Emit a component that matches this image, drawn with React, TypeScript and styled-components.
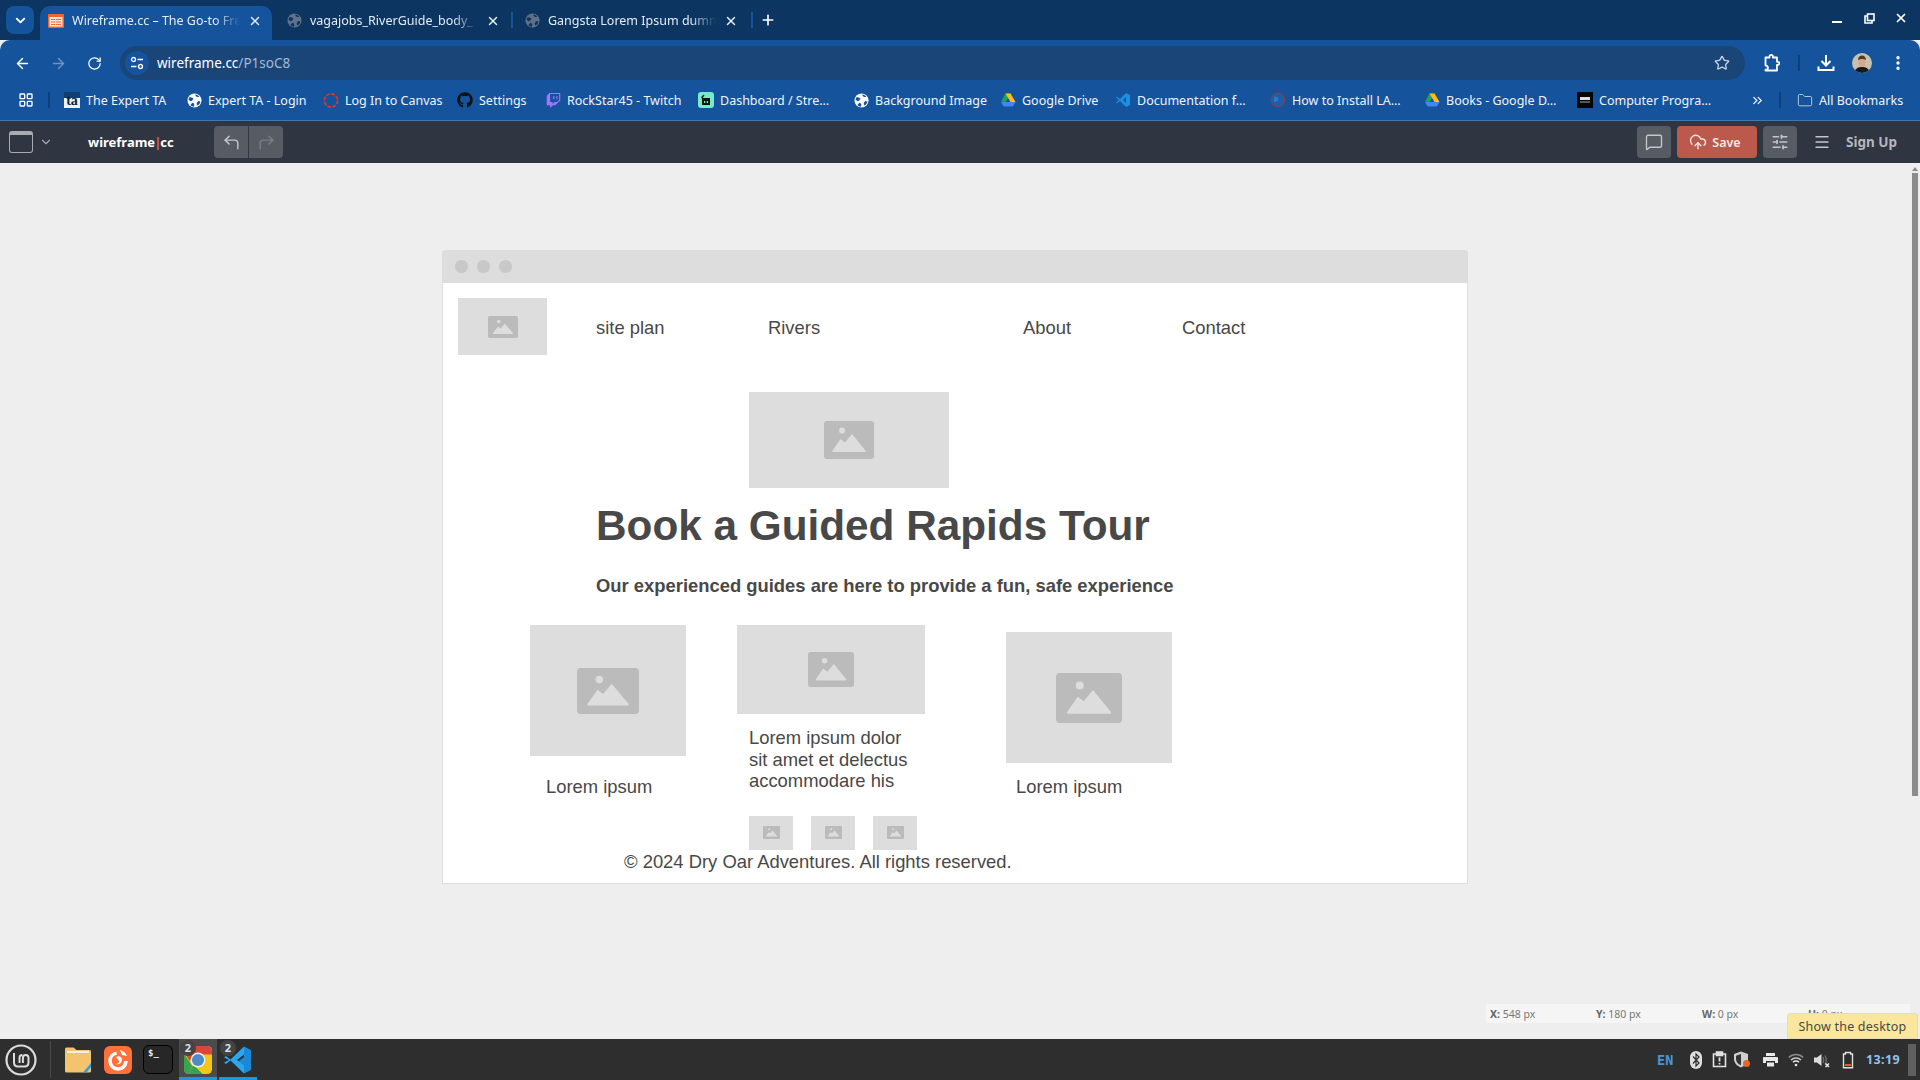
import React from "react";
import styled, { createGlobalStyle } from "styled-components";
import {
  ArrowLeft,
  ArrowRight,
  ChevronDown,
  ChevronsRight,
  CloudUpload,
  CornerUpLeft,
  CornerUpRight,
  EllipsisVertical,
  Folder,
  LayoutGrid,
  Menu,
  MessageSquare,
  Plus,
  RotateCw,
  SlidersHorizontal,
  Star,
  X,
} from "lucide-react";
import { FaGithub, FaTwitch } from "react-icons/fa";

const GlobalStyle = createGlobalStyle`
  html, body {
    margin: 0;
    padding: 0;
    background: #eeeeee;
  }
  * {
    box-sizing: border-box;
  }
`;

const Page = styled.div`
  width: 1920px;
  height: 1080px;
  display: flex;
  flex-direction: column;
  overflow: hidden;
  font-family: "Noto Sans", "Open Sans", sans-serif;
`;

const TabStrip = styled.div`
  height: 40px;
  display: flex;
  padding-left: 6px;
  background: #0c3562;
  color: #e4ecf6;
`;

const TabListButton = styled.div`
  width: 28px;
  height: 28px;
  margin: 6px 6px 0 0;
  border-radius: 8px;
  background: #15539c;
  display: flex;
  align-items: center;
  justify-content: center;
  color: #fff;
`;

const Tab = styled.div<{ $active?: boolean }>`
  width: 232px;
  height: 34px;
  margin-top: 6px;
  padding: 0 8px 5px;
  display: flex;
  align-items: center;
  gap: 8px;
  border-radius: 10px 10px 0 0;
  background: ${({ $active }) => ($active ? "#15539c" : "transparent")};
  font-size: 12.5px;
  flex-shrink: 0;
`;

const TabTitle = styled.span`
  width: 168px;
  white-space: nowrap;
  -webkit-mask-image: linear-gradient(to right, #000 85%, transparent);
  mask-image: linear-gradient(to right, #000 85%, transparent);
`;

const TabGap = styled.div<{ $width: number }>`
  width: ${({ $width }) => $width}px;
  flex-shrink: 0;
`;

const TabDivider = styled.div<{ $left: number; $right: number }>`
  width: 2px;
  height: 16px;
  margin: 12px ${({ $right }) => $right}px 0 ${({ $left }) => $left}px;
  background: #15539c;
  flex-shrink: 0;
`;

const NewTab = styled.div`
  margin: 12px 0 0 7px;
  color: #fff;
  display: flex;
`;

const WindowButtons = styled.div`
  margin-left: auto;
  display: flex;
  padding: 0 3px 4px 0;
  align-items: center;
  color: #fff;
`;

const WindowButton = styled.div`
  width: 32px;
  display: flex;
  justify-content: center;
`;

const MinimizeGlyph = styled.div`
  width: 10px;
  height: 2px;
  margin-top: 8px;
  background: #fff;
`;

const Toolbar = styled.div`
  height: 40px;
  padding-top: 6px;
  display: flex;
  background: #15539c;
  border-radius: 10px 10px 0 0;
  color: #fff;
`;

const ToolSlot = styled.div<{ $muted?: boolean }>`
  width: 36px;
  height: 34px;
  display: flex;
  align-items: center;
  justify-content: center;
  color: ${({ $muted }) => ($muted ? "#6f93c0" : "#fff")};
`;

const NavGroup = styled.div`
  display: flex;
  padding-left: 4px;
  margin-right: 8px;
`;

const AddressBar = styled.div`
  width: 1625px;
  height: 34px;
  border-radius: 17px;
  background: #1a4579;
  display: flex;
  align-items: center;
  padding: 0 15px 0 5px;
  font-size: 13.5px;
  color: #fff;
`;

const SiteChip = styled.div`
  width: 24px;
  height: 24px;
  border-radius: 50%;
  background: #15539c;
  margin-right: 8px;
  display: flex;
  align-items: center;
  justify-content: center;
`;

const UrlPath = styled.span`
  color: #a5bad4;
`;

const BookmarkStar = styled.div`
  margin-left: auto;
  display: flex;
  color: #c5d2e2;
`;

const ToolCluster = styled.div`
  display: flex;
  align-items: flex-start;
  padding-left: 9px;
`;

const ToolDivider = styled.div`
  width: 2px;
  height: 16px;
  margin: 9px 8px 0;
  background: #0f3f78;
`;

const Avatar = styled.div`
  width: 20px;
  height: 20px;
  border-radius: 50%;
  overflow: hidden;
  display: flex;
`;

const BookmarkBar = styled.div`
  height: 40px;
  display: flex;
  align-items: center;
  background: #15539c;
  color: #f0f4fa;
  font-size: 12.5px;
`;

const AppsSlot = styled.div`
  width: 28px;
  margin-left: 12px;
  display: flex;
  justify-content: center;
  color: #fff;
`;

const BarDivider = styled.div<{ $left: number; $right: number }>`
  width: 2px;
  height: 16px;
  margin: 0 ${({ $right }) => $right}px 0 ${({ $left }) => $left}px;
  background: #0f3f78;
`;

const Bookmark = styled.div<{ $width: number }>`
  width: ${({ $width }) => $width}px;
  display: flex;
  align-items: center;
  gap: 6px;
  white-space: nowrap;
  flex-shrink: 0;
`;

const Favicon = styled.span`
  width: 16px;
  height: 16px;
  display: flex;
  align-items: center;
  justify-content: center;
  flex-shrink: 0;
`;

const TaFavicon = styled.span`
  width: 16px;
  height: 16px;
  flex-shrink: 0;
  text-align: center;
  background: linear-gradient(to bottom, #123d70 35%, #eef2f6 35%);
  color: #0b2440;
  font-family: "Liberation Serif", serif;
  font-size: 14px;
  font-weight: 700;
  line-height: 17px;
`;

const MintFavicon = styled(Favicon)`
  border-radius: 3px;
  background: #74ebc9;
`;

const MoreSlot = styled.div`
  width: 24px;
  margin-left: 4px;
  display: flex;
  justify-content: center;
`;

const AppBar = styled.div`
  height: 43px;
  border-top: 1px solid #4577ae;
  background: #2f3541;
  display: flex;
  align-items: center;
  color: #c4c6ca;
`;

const CanvasIcon = styled.div`
  width: 24px;
  height: 22px;
  margin-left: 9px;
  border: 1.5px solid #a9abaf;
  border-top-width: 4px;
  border-radius: 3px;
`;

const CanvasCaret = styled.div`
  width: 14px;
  margin-left: 6px;
  display: flex;
  color: #a5a8ae;
`;

const Logo = styled.div`
  width: 100px;
  margin-left: 35px;
  font-size: 13px;
  font-weight: 700;
  color: #fff;
`;

const LogoBar = styled.span`
  margin: 0 -1px;
  color: #e2634d;
`;

const HistoryGroup = styled.div`
  margin-left: 26px;
  display: flex;
  gap: 1px;
  border-radius: 4px;
  overflow: hidden;
`;

const HistoryButton = styled.div<{ $muted?: boolean }>`
  width: 34px;
  height: 32px;
  display: flex;
  align-items: center;
  justify-content: center;
  background: #575b64;
  color: ${({ $muted }) => ($muted ? "#7b7f86" : "#c4c6ca")};
`;

const AppActions = styled.div`
  margin-left: auto;
  display: flex;
  align-items: center;
  gap: 6px;
`;

const SquareButton = styled.div`
  width: 34px;
  height: 32px;
  border-radius: 4px;
  background: #575b64;
  display: flex;
  align-items: center;
  justify-content: center;
`;

const SaveButton = styled.div`
  width: 80px;
  height: 32px;
  border-radius: 4px;
  background: #bb5a4c;
  color: #f3e7e4;
  font-size: 12.5px;
  font-weight: 600;
  display: flex;
  align-items: center;
  justify-content: center;
  gap: 5px;
  padding-right: 4px;
`;

const MenuSlot = styled.div`
  margin-left: 10px;
  display: flex;
`;

const SignUp = styled.div`
  width: 50px;
  margin: 0 24px 0 9px;
  font-size: 13.5px;
  font-weight: 700;
  white-space: nowrap;
  color: #b5b7bb;
`;

const Canvas = styled.div`
  flex: 1;
  position: relative;
  padding: 87px 0 0 442px;
  background: #eeeeee;
`;

const MockWindow = styled.div`
  width: 1026px;
  height: 634px;
  background: #fff;
  border: 1px solid #dddddd;
  border-top: none;
  border-radius: 4px 4px 0 0;
  font-family: "Liberation Sans", Arial, sans-serif;
  color: #484848;
  font-size: 18.4px;
  line-height: 21.6px;
`;

const MockTitleBar = styled.div`
  height: 33px;
  margin: 0 -1px;
  padding-left: 13px;
  display: flex;
  align-items: center;
  gap: 9.5px;
  background: #dddddd;
  border-radius: 4px 4px 0 0;
`;

const MockDot = styled.div`
  width: 12.5px;
  height: 12.5px;
  border-radius: 50%;
  background: #c8c8c8;
`;

const MockNav = styled.div`
  display: grid;
  grid-template-columns: 138px 172px 255px 159px auto;
  align-items: center;
  padding: 15px 0 0 15px;
`;

const NavLabel = styled.span`
  padding-top: 3px;
`;

const Placeholder = styled.div<{ $w: number; $h: number }>`
  width: ${({ $w }) => $w}px;
  height: ${({ $h }) => $h}px;
  background: #dddddd;
  display: flex;
  align-items: center;
  justify-content: center;
`;

const Hero = styled(Placeholder)`
  margin: 37px 0 0 306px;
`;

const Heading = styled.h1`
  margin: 12px 0 0 153px;
  font-size: 42.3px;
  line-height: 52px;
  font-weight: 700;
`;

const Subheading = styled.h2`
  margin: 23px 0 0 153px;
  font-size: 18.4px;
  line-height: 22px;
  font-weight: 700;
`;

const CardRow = styled.div`
  display: grid;
  grid-template-columns: 207px 269px auto;
  margin-top: 28px;
  padding-left: 87px;
`;

const Card = styled.div<{ $top?: number }>`
  margin-top: ${({ $top }) => $top ?? 0}px;
`;

const Caption = styled.p<{ $top: number; $left: number }>`
  margin: ${({ $top }) => $top}px 0 0 ${({ $left }) => $left}px;
`;

const CardText = styled.p`
  margin: 13px 0 0 12px;
  width: 170px;
`;

const ThumbRow = styled.div`
  display: flex;
  gap: 18px;
  margin: 24px 0 0 12px;
`;

const Footer = styled.p`
  margin: 1px 0 0 181px;
`;

const StatusBar = styled.div`
  position: absolute;
  left: 1486px;
  top: 841px;
  width: 424px;
  height: 19px;
  display: grid;
  grid-template-columns: repeat(4, 106px);
  align-items: center;
  padding-left: 4px;
  background: #f5f5f5;
  color: #777;
  font-size: 10.5px;
`;

const StatusKey = styled.b`
  color: #666;
`;

const ScrollTrack = styled.div`
  position: absolute;
  top: 10px;
  right: 2px;
  width: 6px;
  height: 623px;
  background: #8c8c8c;
`;

const ScrollArrow = styled.div`
  position: absolute;
  top: 4px;
  right: 2px;
  border: 3px solid transparent;
  border-top: none;
  border-bottom: 4px solid #8c8c8c;
`;

const Tooltip = styled.div`
  position: absolute;
  right: 2px;
  bottom: 0;
  width: 131px;
  height: 26px;
  display: flex;
  align-items: center;
  justify-content: center;
  background: #fbe69e;
  border: 1px solid #e4dcc0;
  border-radius: 3px 3px 0 0;
  color: #4a4a40;
  font-size: 12.5px;
  letter-spacing: 0.2px;
`;

const Taskbar = styled.div`
  height: 41px;
  background: #2e2e2e;
  display: flex;
  align-items: stretch;
`;

const MintSlot = styled.div`
  width: 50px;
  display: flex;
  align-items: center;
  padding-left: 5px;
`;

const TaskDivider = styled.div`
  width: 1px;
  margin: 2px 8px 2px 0;
  background: #4a4a4a;
`;

const Launchers = styled.div`
  display: flex;
  gap: 2px;
`;

const Launcher = styled.div<{ $state?: "open" | "focused" }>`
  position: relative;
  width: 38px;
  padding-top: 3px;
  display: flex;
  align-items: center;
  justify-content: center;
  background: ${({ $state }) => ($state === "focused" ? "#4b4b4b" : "transparent")};
  border-bottom: 3px solid ${({ $state }) => ($state ? "#1c97dd" : "transparent")};
`;

const CountBadge = styled.span`
  position: absolute;
  top: 1px;
  left: 1px;
  width: 16px;
  height: 16px;
  border-radius: 50%;
  background: #444444;
  color: #d5dfe8;
  font-size: 11px;
  font-weight: 700;
  line-height: 16px;
  text-align: center;
`;

const TerminalIcon = styled.div`
  width: 30px;
  height: 29px;
  padding: 1px 0 0 4px;
  border-radius: 6px;
  border: 1px solid #000;
  background: #272727;
  color: #eee;
  font-family: "DejaVu Sans Mono", monospace;
  font-size: 9px;
  font-weight: 700;
  line-height: 12px;
`;

const Tray = styled.div`
  margin-left: auto;
  padding-right: 4px;
  display: flex;
  align-items: center;
  color: #e2e2e2;
`;

const TrayLang = styled.div`
  width: 27px;
  color: #4a97d3;
  font-family: "DejaVu Sans Mono", monospace;
  font-size: 13.5px;
  font-weight: 700;
`;

const TraySlot = styled.div<{ $w: number }>`
  width: ${({ $w }) => $w}px;
  display: flex;
  justify-content: center;
`;

const TrayClock = styled.div`
  width: 42px;
  margin-left: 8px;
  color: #8fc2ee;
  font-size: 12.5px;
  font-weight: 700;
  letter-spacing: 0.4px;
`;

const ShowDesktop = styled.div`
  width: 8px;
  height: 32px;
  background: #5e5e5e;
`;

// grey placeholder picture used all over the mock
const ImageGlyph = ({ w, h }: { w: number; h: number }) => (
  <svg width={w} height={h} viewBox="0 0 50 38" preserveAspectRatio="none">
    <rect width="50" height="38" rx="3" fill="#bbbbbb" />
    <ellipse cx="18" cy="9.5" rx="3" ry="3" fill="#dddddd" />
    <path
      d="M8.5 29.5 16.5 18l4.5 3.5L28 13l13.5 16.5q.8 1.5-.8 1.5H9.3q-1.6 0-.8-1.5Z"
      fill="#dddddd"
    />
  </svg>
);

const Globe = ({ back = "#fff", land = "#15539c", size = 15 }) => (
  <svg width={size} height={size} viewBox="0 0 16 16">
    <circle cx="8" cy="8" r="7.5" fill={back} />
    <path
      d="M3 4.2c1.3.4 2.2 1 3.4 1 .8.9.2 1.7-.6 2.1-.2 1.2-.9 1.6-2 1.5L1.6 7C1.7 6 2.2 5 3 4.2ZM9 1.6c1.6.2 3 1 4 2.2-.6.6-1.3.6-2 .4-1-.2-1.3-.8-2-1.4Zm3 6.9c1 .2 1.8.4 2.3.8-.4 1.7-1.6 3.2-3.1 4.1-.8-.7-1-1.7-.7-2.7.4-.8.8-1.4 1.5-2.2ZM6 10.5c1 .3 1.6 1 1.8 2l-.6 2.2C5.8 14.5 4.6 13.8 3.700 12.800 4.400 11.800 5 11 6 10.500Z"
      fill={land}
    />
  </svg>
);

const WireframeFavicon = () => (
  <svg width="16" height="14" viewBox="0 0 16 14">
    <rect width="16" height="14" rx="1" fill="#f2662d" />
    <rect x="1.5" y="3" width="13" height="9.5" fill="#fde4d5" />
    <path d="M3 5h4v1H3Zm5 0h5v1H8ZM3 7.500h4v1H3Zm5 0h5v1H8ZM3 10h4v1H3Zm5 0h5v1H8Z" fill="#f2662d" />
  </svg>
);

const SiteInfoGlyph = () => (
  <svg width="14" height="14" viewBox="0 0 14 14" fill="none" stroke="#fff" strokeWidth="1.3">
    <circle cx="3.5" cy="3.5" r="2" />
    <path d="M7.5 3.5H13M1 10.500h5.500" />
    <circle cx="10.5" cy="10.5" r="2" />
  </svg>
);

const CanvasRing = () => (
  <svg width="17" height="17" viewBox="0 0 17 17">
    <circle cx="8.5" cy="8.5" r="7" fill="none" stroke="#e5322d" strokeWidth="1.8" strokeDasharray="4 1.5" />
  </svg>
);

const DriveGlyph = ({ size = 16 }) => (
  <svg width={size} height={size} viewBox="0 0 16 16">
    <path d="M5.500 1.500h5L6 9.800H1Z" fill="#1fa463" />
    <path d="M10.500 1.500 15.500 10h-5L5.500 1.500Z" fill="#ffc107" />
    <path d="M3.500 14.500 1 10h14.500L13 14.500Z" fill="#4285f4" />
  </svg>
);

const DocsFavicon = () => (
  <svg width="16" height="16" viewBox="0 0 16 16">
    <path d="M11 1 15 3v10l-4 2-6-6-3 2.300L1 10.500 4 8 1 5.500l1-.8L5 7Zm0 4L8 8l3 3Z" fill="#1c8fe0" />
  </svg>
);

const LaravelFavicon = () => (
  <svg width="16" height="16" viewBox="0 0 16 16">
    <circle cx="8" cy="8" r="7" fill="#1a5fa8" stroke="#a8323a" strokeWidth="1" />
    <path d="M4 5c2-1 3 0 4 1s0 3-1 3-2 2-3 1Z" fill="#2c7cc4" />
  </svg>
);

const ByuFavicon = () => (
  <svg width="16" height="16" viewBox="0 0 16 16">
    <rect width="16" height="16" fill="#050505" />
    <rect x="3" y="5" width="10" height="3" fill="#ddd" />
    <rect x="3" y="9" width="10" height="2" fill="#555" />
  </svg>
);

const DashboardFavicon = () => (
  <svg width="12" height="12" viewBox="0 0 12 12">
    <path d="M2 4h8v7H2Z" fill="#111" />
    <path d="M1.500 4 4 1" stroke="#111" strokeWidth="1.3" />
    <rect x="4" y="7" width="1.3" height="2" fill="#74ebc9" />
    <rect x="6.7" y="7" width="1.3" height="2" fill="#74ebc9" />
  </svg>
);

const PuzzleGlyph = () => (
  <svg width="16" height="18" viewBox="0 0 16 18" fill="none" stroke="#fff" strokeWidth="1.8" strokeLinejoin="round">
    <path d="M1.500 3.500h4V2.600a1.700 1.700 0 0 1 3.400 0v.9h4.100v4.300h.8a1.500 1.500 0 0 1 0 3h-.8v5.700H1.500v-.8a2 2 0 0 0 1.700-3.500 2 2 0 0 0-1.700-.7Z" />
  </svg>
);

const DownloadGlyph = () => (
  <svg width="18" height="18" viewBox="0 0 18 18" fill="none" stroke="#fff" strokeWidth="2">
    <path d="M9 1v10M4.500 7 9 11.500 13.500 7M1.500 12.500v3.500h15v-3.500" />
  </svg>
);

const AvatarPhoto = () => (
  <svg width="20" height="20" viewBox="0 0 20 20">
    <rect width="20" height="20" fill="#c9c0b0" />
    <ellipse cx="10" cy="9" rx="4" ry="5.5" fill="#d4ab90" />
    <path d="M6 7c0-3 1.800-4.500 4-4.500S14 4 14 7c-2-1.200-5.500-1.200-8 0Z" fill="#4c3a2b" />
    <path d="M2 20c1-5 4.500-6 8-6s7 1 8 6Z" fill="#1a1a1c" />
  </svg>
);

const MintLogo = () => (
  <svg width="32" height="32" viewBox="0 0 32 32" fill="none" stroke="#dcdcdc">
    <circle cx="16" cy="16" r="14.5" strokeWidth="2.2" />
    <path d="M9 9v9.500q0 4 4 4h6.500q4 0 4-4V14q0-3-2.800-3t-2.800 3v5M14.500 19v-5q0-3 2.800-3" strokeWidth="2" />
  </svg>
);

const FilesIcon = () => (
  <svg width="28" height="28" viewBox="0 0 28 28">
    <path d="M1 3q0-1.500 1.500-1.500h7l3 2.500h13q1.500 0 1.500 1.500V25q0 1.500-1.500 1.500h-23Q1 26.500 1 25Z" fill="#f5c36d" />
    <rect x="3" y="5" width="22" height="2" fill="#f4f0e6" />
    <path d="M19 26.500 27 17v4l-4.500 5.500Z" fill="#2f9fe0" />
  </svg>
);

const FirefoxIcon = () => (
  <svg width="28" height="28" viewBox="0 0 28 28">
    <rect width="28" height="28" rx="6" fill="#ff7139" />
    <circle cx="14" cy="15" r="8" fill="none" stroke="#fff" strokeWidth="3.5" strokeDasharray="36 14" />
    <path d="M12 11c3-2 6 0 6 3s-3 5-6 4c2 0 3-1 3-2.500S13 13 12 11Z" fill="#fff" />
    <path d="M16 4c3 1 6 3 7 6l-5-1Z" fill="#fff" />
  </svg>
);

const ChromeIcon = () => (
  <svg width="28" height="28" viewBox="0 0 30 30">
    <rect width="30" height="30" rx="5" fill="#f5c518" />
    <path d="M0 6q0-6 5-6h20q5 0 5 6v3H15L6 16Z" fill="#d8463c" />
    <path d="M0 8l9 14-4 8q-5 0-5-5Z" fill="#36a453" />
    <path d="M10 20 20 30H5Z" fill="#36a453" />
    <circle cx="15" cy="15" r="8" fill="#f2f2f2" />
    <circle cx="15" cy="15" r="6.5" fill="#4a8bc9" />
  </svg>
);

const VsCodeIcon = () => (
  <svg width="30" height="30" viewBox="0 0 30 30">
    <path d="M21 1.500 28 5v20l-7 3.500-9-9.500 9-7Z" fill="#1a8ad8" />
    <path d="M21 1.500 7.500 14.500l-4.500-3.500-2 1.500 5 2.500-5 2.500 2 1.500 4.500-3.500L21 28.500v-8l-7-5.500 7-5.500Z" fill="#2aa7ef" />
  </svg>
);

const BluetoothPill = () => (
  <svg width="12" height="18" viewBox="0 0 12 18">
    <rect width="12" height="18" rx="6" fill="#dedede" />
    <path d="M3 5.500 9 12 6 15V3l3 3-6 6.500" fill="none" stroke="#2e2e2e" strokeWidth="1.2" />
  </svg>
);

const ClipboardAlert = () => (
  <svg width="15" height="17" viewBox="0 0 15 17" fill="none" stroke="#e2e2e2" strokeWidth="1.6">
    <path d="M4.500 3H1.500v12.500h12V3h-3" />
    <rect x="4.5" y="1" width="6" height="3.5" fill="#e2e2e2" />
    <path d="M7.500 6.500v4M7.500 12v1.500" strokeWidth="1.8" />
  </svg>
);

const ShieldAlert = () => (
  <svg width="18" height="17" viewBox="0 0 18 17">
    <path d="M8 .5 15 3v5c0 4-3 7-7 8.500C4 15 1 12 1 8V3Z" fill="#cfcfcf" />
    <path d="M8 3 3 4.700V8c0 3 2 5 5 6.300Z" fill="#333" />
    <circle cx="13.5" cy="12.5" r="3.5" fill="#e0662c" />
  </svg>
);

const PrinterGlyph = () => (
  <svg width="15" height="14" viewBox="0 0 15 14" fill="#e8e8e8">
    <rect x="3" width="9" height="3" />
    <path d="M1 4h13q1 0 1 1v5h-3V8H3v2H0V5q0-1 1-1Z" />
    <rect x="4" y="9.5" width="7" height="4" />
  </svg>
);

const WifiGlyph = () => (
  <svg width="16" height="14" viewBox="0 0 16 14" fill="none" strokeWidth="1.5">
    <path d="M.8 4.500a10 10 0 0 1 14.400 0" stroke="#8a8a8a" />
    <path d="M3 7a7 7 0 0 1 10 0" stroke="#c8c8c8" />
    <path d="M5 9.300a4.200 4.200 0 0 1 6 0" stroke="#e8e8e8" />
    <circle cx="8" cy="12" r="1.3" fill="#e8e8e8" />
  </svg>
);

const VolumeMuted = () => (
  <svg width="16" height="16" viewBox="0 0 16 16">
    <path d="M0 5.500h3L7.500 2v12L3 10.500H0Z" fill="#dcdcdc" />
    <path d="M9 5q1.500 3 0 6M11 3.500q2.500 4.500 0 9" fill="none" stroke="#6f6f6f" strokeWidth="1.3" />
    <path d="M11.500 11.500l3.500 3.500m0-3.500L11.500 15" stroke="#e8e8e8" strokeWidth="1.6" />
  </svg>
);

const BatteryLow = () => (
  <svg width="12" height="18" viewBox="0 0 12 18">
    <path d="M3.500 1.500h5V3h2v13.800h-9V3h2Z" fill="none" stroke="#e2e2e2" strokeWidth="1.4" />
    <rect x="3" y="13" width="6" height="2" fill="#d9622b" />
  </svg>
);

const bookmarks = [
  { title: "The Expert TA", width: 122, icon: <TaFavicon>ta</TaFavicon> },
  { title: "Expert TA - Login", width: 137, icon: <Favicon><Globe /></Favicon> },
  { title: "Log In to Canvas", width: 134, icon: <Favicon><CanvasRing /></Favicon> },
  { title: "Settings", width: 88, icon: <Favicon><FaGithub size={16} color="#111" /></Favicon> },
  { title: "RockStar45 - Twitch", width: 153, icon: <Favicon><FaTwitch size={15} color="#a970ff" /></Favicon> },
  { title: "Dashboard / Stre…", width: 155, icon: <MintFavicon><DashboardFavicon /></MintFavicon> },
  { title: "Background Image", width: 147, icon: <Favicon><Globe /></Favicon> },
  { title: "Google Drive", width: 115, icon: <Favicon><DriveGlyph /></Favicon> },
  { title: "Documentation f…", width: 155, icon: <Favicon><DocsFavicon /></Favicon> },
  { title: "How to Install LA…", width: 154, icon: <Favicon><LaravelFavicon /></Favicon> },
  { title: "Books - Google D…", width: 153, icon: <Favicon><DriveGlyph /></Favicon> },
  { title: "Computer Progra…", width: 164, icon: <Favicon><ByuFavicon /></Favicon> },
];

const App: React.FC = () => {
  return (
    <Page>
      <GlobalStyle />
      <TabStrip>
        <TabListButton>
          <ChevronDown size={15} strokeWidth={3} />
        </TabListButton>
        <Tab $active>
          <Favicon><WireframeFavicon /></Favicon>
          <TabTitle>Wireframe.cc – The Go-to Fre</TabTitle>
          <X size={14} strokeWidth={2.5} />
        </Tab>
        <TabGap $width={6} />
        <Tab>
          <Favicon><Globe back="#5f7287" land="#0c3562" /></Favicon>
          <TabTitle>vagajobs_RiverGuide_body_</TabTitle>
          <X size={14} strokeWidth={2.5} />
        </Tab>
        <TabDivider $left={1} $right={3} />
        <Tab>
          <Favicon><Globe back="#5f7287" land="#0c3562" /></Favicon>
          <TabTitle>Gangsta Lorem Ipsum dumm</TabTitle>
          <X size={14} strokeWidth={2.5} />
        </Tab>
        <TabDivider $left={3} $right={0} />
        <NewTab>
          <Plus size={16} strokeWidth={2.5} />
        </NewTab>
        <WindowButtons>
          <WindowButton><MinimizeGlyph /></WindowButton>
          <WindowButton>
            <svg width="11" height="11" viewBox="0 0 11 11" fill="none" stroke="#fff" strokeWidth="1.6">
              <rect x="3.5" y="1" width="6.5" height="6.5" />
              <path d="M3 3H1v7h7V8" />
            </svg>
          </WindowButton>
          <WindowButton><X size={14} strokeWidth={3} /></WindowButton>
        </WindowButtons>
      </TabStrip>

      <Toolbar>
        <NavGroup>
          <ToolSlot><ArrowLeft size={17} strokeWidth={2} /></ToolSlot>
          <ToolSlot $muted><ArrowRight size={17} strokeWidth={2} /></ToolSlot>
          <ToolSlot><RotateCw size={15} strokeWidth={2} /></ToolSlot>
        </NavGroup>
        <AddressBar>
          <SiteChip><SiteInfoGlyph /></SiteChip>
          <span>
            wireframe.cc<UrlPath>/P1soC8</UrlPath>
          </span>
          <BookmarkStar><Star size={16} strokeWidth={2} /></BookmarkStar>
        </AddressBar>
        <ToolCluster>
          <ToolSlot><PuzzleGlyph /></ToolSlot>
          <ToolDivider />
          <ToolSlot><DownloadGlyph /></ToolSlot>
          <ToolSlot><Avatar><AvatarPhoto /></Avatar></ToolSlot>
          <ToolSlot><EllipsisVertical size={18} strokeWidth={2.5} /></ToolSlot>
        </ToolCluster>
      </Toolbar>

      <BookmarkBar>
        <AppsSlot><LayoutGrid size={16} strokeWidth={2} /></AppsSlot>
        <BarDivider $left={8} $right={14} />
        {bookmarks.map((b) => (
          <Bookmark key={b.title} $width={b.width}>
            {b.icon}
            <span>{b.title}</span>
          </Bookmark>
        ))}
        <MoreSlot><ChevronsRight size={15} strokeWidth={2} /></MoreSlot>
        <BarDivider $left={10} $right={16} />
        <Bookmark $width={120}>
          <Favicon><Folder size={17} strokeWidth={1.5} color="#b5c4d8" /></Favicon>
          <span>All Bookmarks</span>
        </Bookmark>
      </BookmarkBar>

      <AppBar>
        <CanvasIcon />
        <CanvasCaret><ChevronDown size={14} /></CanvasCaret>
        <Logo>
          wireframe<LogoBar>|</LogoBar>cc
        </Logo>
        <HistoryGroup>
          <HistoryButton><CornerUpLeft size={19} strokeWidth={1.8} /></HistoryButton>
          <HistoryButton $muted><CornerUpRight size={19} strokeWidth={1.8} /></HistoryButton>
        </HistoryGroup>
        <AppActions>
          <SquareButton><MessageSquare size={18} strokeWidth={1.8} /></SquareButton>
          <SaveButton>
            <CloudUpload size={18} strokeWidth={1.8} />
            Save
          </SaveButton>
          <SquareButton><SlidersHorizontal size={18} strokeWidth={2.2} /></SquareButton>
          <MenuSlot><Menu size={18} strokeWidth={1.8} /></MenuSlot>
          <SignUp>Sign Up</SignUp>
        </AppActions>
      </AppBar>

      <Canvas>
        <MockWindow>
          <MockTitleBar>
            <MockDot />
            <MockDot />
            <MockDot />
          </MockTitleBar>
          <MockNav>
            <Placeholder $w={89} $h={57}><ImageGlyph w={30} h={22} /></Placeholder>
            <NavLabel>site plan</NavLabel>
            <NavLabel>Rivers</NavLabel>
            <NavLabel>About</NavLabel>
            <NavLabel>Contact</NavLabel>
          </MockNav>
          <Hero $w={200} $h={96}><ImageGlyph w={50} h={38} /></Hero>
          <Heading>Book a Guided Rapids Tour</Heading>
          <Subheading>Our experienced guides are here to provide a fun, safe experience</Subheading>
          <CardRow>
            <Card>
              <Placeholder $w={156} $h={131}><ImageGlyph w={62} h={46} /></Placeholder>
              <Caption $top={20} $left={16}>Lorem ipsum</Caption>
            </Card>
            <Card>
              <Placeholder $w={188} $h={89}><ImageGlyph w={46} h={35} /></Placeholder>
              <CardText>Lorem ipsum dolor sit amet et delectus accommodare his</CardText>
              <ThumbRow>
                <Placeholder $w={44} $h={34}><ImageGlyph w={17} h={13} /></Placeholder>
                <Placeholder $w={44} $h={34}><ImageGlyph w={17} h={13} /></Placeholder>
                <Placeholder $w={44} $h={34}><ImageGlyph w={17} h={13} /></Placeholder>
              </ThumbRow>
            </Card>
            <Card $top={7}>
              <Placeholder $w={166} $h={131}><ImageGlyph w={66} h={50} /></Placeholder>
              <Caption $top={13} $left={10}>Lorem ipsum</Caption>
            </Card>
          </CardRow>
          <Footer>© 2024 Dry Oar Adventures. All rights reserved.</Footer>
        </MockWindow>
        <ScrollArrow />
        <ScrollTrack />
        <StatusBar>
          <span><StatusKey>X:</StatusKey> 548 px</span>
          <span><StatusKey>Y:</StatusKey> 180 px</span>
          <span><StatusKey>W:</StatusKey> 0 px</span>
          <span><StatusKey>H:</StatusKey> 0 px</span>
        </StatusBar>
        <Tooltip>Show the desktop</Tooltip>
      </Canvas>

      <Taskbar>
        <MintSlot><MintLogo /></MintSlot>
        <TaskDivider />
        <Launchers>
          <Launcher><FilesIcon /></Launcher>
          <Launcher><FirefoxIcon /></Launcher>
          <Launcher><TerminalIcon>$_</TerminalIcon></Launcher>
          <Launcher $state="focused">
            <ChromeIcon />
            <CountBadge>2</CountBadge>
          </Launcher>
          <Launcher $state="open">
            <VsCodeIcon />
            <CountBadge>2</CountBadge>
          </Launcher>
        </Launchers>
        <Tray>
          <TrayLang>EN</TrayLang>
          <TraySlot $w={24}><BluetoothPill /></TraySlot>
          <TraySlot $w={22}><ClipboardAlert /></TraySlot>
          <TraySlot $w={24}><ShieldAlert /></TraySlot>
          <TraySlot $w={32}><PrinterGlyph /></TraySlot>
          <TraySlot $w={20}><WifiGlyph /></TraySlot>
          <TraySlot $w={32}><VolumeMuted /></TraySlot>
          <TraySlot $w={20}><BatteryLow /></TraySlot>
          <TrayClock>13:19</TrayClock>
          <ShowDesktop />
        </Tray>
      </Taskbar>
    </Page>
  );
};

export default App;
